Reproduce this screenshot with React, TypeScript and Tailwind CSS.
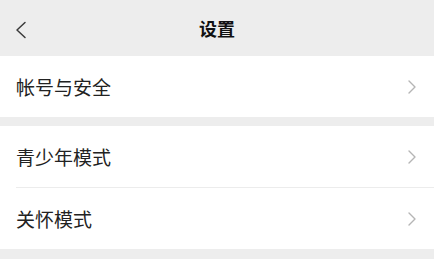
import React from "react";

const font = { fontFamily: '"Noto Sans CJK SC", "Noto Sans", sans-serif' };

function Chevron() {
  return (
    <svg width="10" height="16" viewBox="0 0 10 16" className="shrink-0">
      <path d="M2 2 L8 8 L2 14" fill="none" stroke="#b5b5b5" strokeWidth="1.4" strokeLinecap="round" strokeLinejoin="round" />
    </svg>
  );
}

function Row({ label }: { label: string }) {
  return (
    <div className="flex h-[61px] items-center justify-between bg-white pl-[16px] pr-[17px]">
      <span className="text-[19px] leading-none text-[#222]">{label}</span>
      <Chevron />
    </div>
  );
}

export default function App() {
  return (
    <div className="h-[276px] w-[434px] overflow-hidden bg-white" style={font}>
      <div className="relative flex h-[56px] items-center justify-center bg-[#ededed]">
        <svg width="14" height="18" viewBox="0 0 14 18" className="absolute left-[14px] top-[21px]">
          <path d="M11 1.5 L3 9 L11 16.5" fill="none" stroke="#3a3a3a" strokeWidth="1.5" strokeLinecap="round" strokeLinejoin="round" />
        </svg>
        <span className="text-[18px] font-semibold text-[#111]">设置</span>
      </div>
      <Row label="帐号与安全" />
      <div className="h-[9px] bg-[#ededed]" />
      <Row label="青少年模式" />
      <div className="bg-white pl-[16px]">
        <div className="h-px bg-[#ececec]" />
      </div>
      <Row label="关怀模式" />
      <div className="h-[10px] bg-[#ededed]" />
    </div>
  );
}
